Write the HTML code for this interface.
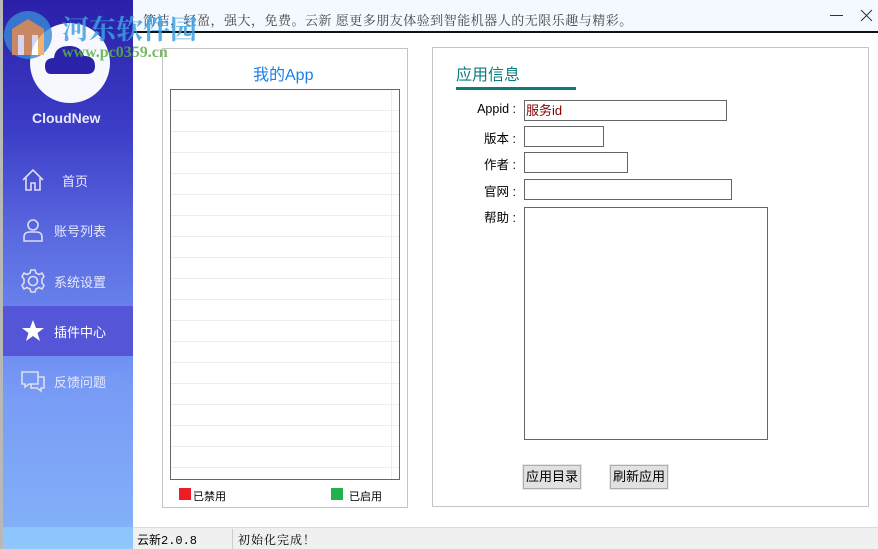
<!DOCTYPE html>
<html><head><meta charset="utf-8"><style>
*{margin:0;padding:0;box-sizing:border-box}
body{width:878px;height:549px;overflow:hidden;position:relative;background:#fff;font-family:"Liberation Sans","Noto Sans CJK SC",sans-serif;font-size:12px;color:#000}
.abs{position:absolute}
#side{left:0;top:0;width:133px;height:527px;background:linear-gradient(180deg,#2a1fa8 0%,#3d3ec8 25%,#5a6ae0 45%,#7394f4 70%,#8cc4fc 100%);border-left:3px solid #b8b8b8;overflow:hidden}
#bottomside{left:0;top:527px;width:133px;height:22px;background:linear-gradient(#8cc4fc,#90c8fc);border-left:3px solid #b8b8b8}
.nav{position:absolute;left:3px;width:130px;height:50px;color:#e6e8ff;font-size:13px}
.nav span{position:absolute;left:51px;top:16px}
.nav svg{position:absolute;left:18px;top:13px}
#top{left:133px;top:0;width:745px;height:33px;background:#f4f8ff;border-bottom:2px solid #111}
.fld{position:absolute;border:1px solid #666;background:#fff}
.lbl{position:absolute;font-size:12.5px;text-align:right;width:70px}
.btn{position:absolute;border:1px solid #adadad;background:#e1e1e1;font-size:13px;text-align:center;line-height:22px;height:24px;outline:1px solid #e8e8e8}
</style></head><body>
<div id="side" class="abs">
 <svg class="abs" style="left:0px;top:360px" width="130" height="170" viewBox="0 0 130 170"><path d="M0 55 L28 30 L48 50 L70 40 L112 10 L130 25 L130 170 L0 170Z" fill="#7a9cf6" opacity="0.5"/></svg>
 <div class="abs" style="left:27px;top:23px;width:80px;height:80px;border-radius:50%;background:#f7f8fd"></div>
 <svg class="abs" style="left:42px;top:40px" width="50" height="36" viewBox="0 0 50 36"><path d="M6 34 Q0 34 0 26 Q0 18 9 18 Q10 6 24 6 Q36 6 39 16 Q50 16 50 26 Q50 34 42 34Z" fill="#2a22a8"/></svg>
 <div class="abs" style="left:29px;top:110px;color:#e8eaff;font-size:14px;font-weight:bold">CloudNew</div>
</div>
<div id="bottomside" class="abs"></div>
<div class="abs" style="left:3px;top:306px;width:130px;height:50px;background:#5555d8"></div>
<div class="nav" style="top:155px"><svg width="24" height="24" viewBox="0 0 24 24" fill="none" stroke="#dde" stroke-width="1.6"><path d="M2 12 L12 2 L22 12 M5 10 V22 H10 V15 H14 V22 H19 V10"/></svg><span style="left:59px">首页</span></div>
<div class="nav" style="top:205px"><svg width="24" height="24" viewBox="0 0 24 24" fill="none" stroke="#dde" stroke-width="1.6"><circle cx="12" cy="7" r="5"/><path d="M3 23 V19 Q3 14 9 14 H15 Q21 14 21 19 V23Z"/></svg><span>账号列表</span></div>
<div class="nav" style="top:256px"><svg width="24" height="24" viewBox="0 0 24 24" fill="none" stroke="#dde" stroke-width="1.6"><circle cx="12" cy="12" r="4.5"/><path d="M10 1 H14 L15 4 L18 5.5 L21 4 L23 7.5 L21 10 V14 L23 16.5 L21 20 L18 18.5 L15 20 L14 23 H10 L9 20 L6 18.5 L3 20 L1 16.5 L3 14 V10 L1 7.5 L3 4 L6 5.5 L9 4Z"/></svg><span>系统设置</span></div>
<div class="nav" style="top:306px;color:#fff"><svg width="24" height="24" viewBox="0 0 24 24"><path d="M12 1 L15 9 H23 L16.5 14 L19 22 L12 17 L5 22 L7.5 14 L1 9 H9Z" fill="#fff"/></svg><span>插件中心</span></div>
<div class="nav" style="top:356px"><svg width="24" height="24" viewBox="0 0 24 24" fill="none" stroke="#dde" stroke-width="1.6"><path d="M1 3 H17 V15 H8 L4 18 V15 H1Z M17 8 H23 V19 H20 V22 L16 19 H10 V15"/></svg><span>反馈问题</span></div>

<div id="top" class="abs">
 <div class="abs" style="left:10px;top:10px;font-size:13px;color:#444;letter-spacing:0.5px;font-family:'Liberation Serif','Noto Serif CJK SC',serif">简洁，轻盈，强大，免费。云新 愿更多朋友体验到智能机器人的无限乐趣与精彩。</div>
 <div class="abs" style="left:697px;top:15px;width:13px;height:1px;background:#333"></div>
 <svg class="abs" style="left:727px;top:9px" width="13" height="13"><path d="M1 1 L12 12 M12 1 L1 12" stroke="#333" stroke-width="1"/></svg>
</div>
<svg class="abs" style="left:2px;top:5px" width="52" height="58" viewBox="0 0 52 58" opacity="0.8"><circle cx="26" cy="30" r="24" fill="#3a8ad8"/><path d="M10 24 L26 14 L42 24 V50 H10Z" fill="#f0a050"/><path d="M16 30 H22 V50 H16Z M30 30 H36 V50 H30Z" fill="#fff"/></svg>
<div class="abs" style="left:62px;top:8px;font-size:27px;font-weight:bold;color:#3da0e0;opacity:.85;font-family:'Liberation Serif','Noto Serif CJK SC',serif">河东软件园</div>
<div class="abs" style="left:62px;top:44px;font-size:16px;font-weight:bold;color:#5bb04a;opacity:.85;font-family:'Liberation Serif',serif">www.pc0359.cn</div>

<div class="abs" style="left:162px;top:48px;width:246px;height:460px;border:1px solid #c4c4c4"></div>
<div class="abs" style="left:253px;top:61px;font-size:16px;color:#1a7fe8">我的App</div>
<div class="abs" style="left:170px;top:89px;width:230px;height:391px;border:1px solid #666;background:repeating-linear-gradient(180deg,#fff 0,#fff 20px,#ececec 20px,#ececec 21px)"></div>
<div class="abs" style="left:391px;top:90px;width:1px;height:389px;background:#ececec"></div>
<div class="abs" style="left:179px;top:488px;width:12px;height:12px;background:#ee1c25"></div>
<div class="abs" style="left:193px;top:488px;font-size:11px">已禁用</div>
<div class="abs" style="left:331px;top:488px;width:12px;height:12px;background:#22b14c"></div>
<div class="abs" style="left:349px;top:488px;font-size:11px">已启用</div>

<div class="abs" style="left:432px;top:47px;width:437px;height:460px;border:1px solid #c4c4c4"></div>
<div class="abs" style="left:456px;top:61px;font-size:16px;color:#0b7d7d">应用信息</div>
<div class="abs" style="left:456px;top:87px;width:120px;height:3px;background:#0b7d7d"></div>
<div class="lbl" style="left:446px;top:102px">Appid :</div>
<div class="fld" style="left:524px;top:100px;width:203px;height:21px;color:#800000;font-size:13px;padding-left:1px;line-height:19px">服务id</div>
<div class="lbl" style="left:446px;top:128px">版本 :</div>
<div class="fld" style="left:524px;top:126px;width:80px;height:21px"></div>
<div class="lbl" style="left:446px;top:154px">作者 :</div>
<div class="fld" style="left:524px;top:152px;width:104px;height:21px"></div>
<div class="lbl" style="left:446px;top:181px">官网 :</div>
<div class="fld" style="left:524px;top:179px;width:208px;height:21px"></div>
<div class="lbl" style="left:446px;top:207px">帮助 :</div>
<div class="fld" style="left:524px;top:207px;width:244px;height:233px"></div>
<div class="btn" style="left:523px;top:465px;width:58px">应用目录</div>
<div class="btn" style="left:610px;top:465px;width:58px">刷新应用</div>

<div class="abs" style="left:133px;top:527px;width:745px;height:22px;background:#f0f0f0;border-top:1px solid #dcdcdc"></div>
<div class="abs" style="left:137px;top:531px;font-size:12px;font-family:'Liberation Mono','Noto Sans CJK SC',monospace">云新2.0.8</div>
<div class="abs" style="left:232px;top:529px;width:1px;height:20px;background:#ccc"></div>
<div class="abs" style="left:238px;top:531px;font-size:12px;letter-spacing:1px;font-family:'Liberation Serif','Noto Serif CJK SC',serif">初始化完成！</div>
</body></html>
